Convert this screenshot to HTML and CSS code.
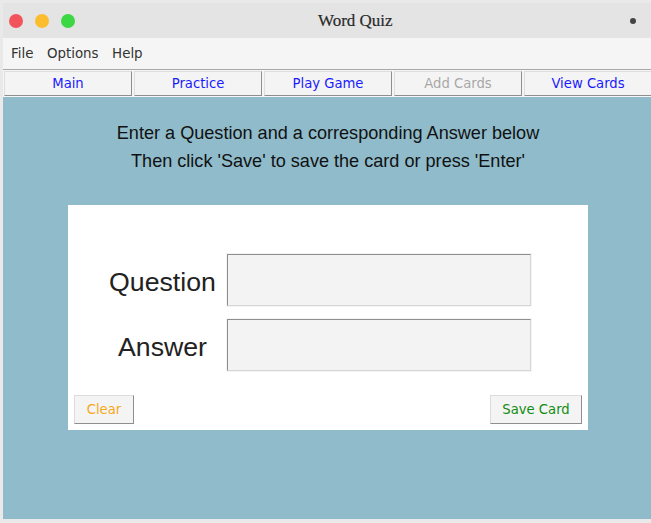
FILE: index.html
```html
<!DOCTYPE html>
<html>
<head>
<meta charset="utf-8">
<title>Word Quiz</title>
<link rel="stylesheet" href="styles.css">
</head>
<body>
<div class="window">
  <div class="titlebar">
    <div class="lights">
      <span class="light red"></span>
      <span class="light yellow"></span>
      <span class="light green"></span>
    </div>
    <div class="title">Word Quiz</div>
    <span class="dot"></span>
  </div>
  <div class="menubar">
    <span class="menu-item">File</span>
    <span class="menu-item">Options</span>
    <span class="menu-item">Help</span>
  </div>
  <div class="tabs">
    <button class="tab">Main</button>
    <button class="tab">Practice</button>
    <button class="tab">Play Game</button>
    <button class="tab disabled">Add Cards</button>
    <button class="tab">View Cards</button>
  </div>
  <div class="panel">
    <div class="intro">
      <p>Enter a Question and a corresponding Answer below</p>
      <p>Then click 'Save' to save the card or press 'Enter'</p>
    </div>
    <div class="card">
      <div class="fields">
        <div class="row">
          <label class="label">Question</label>
          <div class="input"></div>
        </div>
        <div class="row">
          <label class="label">Answer</label>
          <div class="input"></div>
        </div>
      </div>
      <div class="actions">
        <button class="btn clear">Clear</button>
        <button class="btn save">Save Card</button>
      </div>
    </div>
  </div>
</div>
</body>
</html>
```

FILE: styles.css
```css
html, body {
  margin: 0;
  padding: 0;
}
body {
  background: #e9e9e9;
  width: 651px;
  height: 523px;
  overflow: hidden;
}
.window {
  margin: 3px 0 0 3px;
  display: flex;
  flex-direction: column;
}
.titlebar {
  height: 35px;
  background: #e4e4e4;
  display: flex;
  align-items: center;
  position: relative;
}
.lights {
  display: flex;
  gap: 12px;
  margin-left: 6px;
}
.light {
  width: 14px;
  height: 14px;
  border-radius: 50%;
  display: block;
}
.red { background: #f2545b; }
.yellow { background: #fbbd2e; }
.green { background: #3bd843; }
.title {
  font-family: "Liberation Serif", serif;
  font-size: 17px;
  color: #2a2a2a;
  margin-left: 243px;
  padding-top: 1px;
  -webkit-text-stroke: 0.2px #2a2a2a;
}
.dot {
  width: 6px;
  height: 6px;
  border-radius: 50%;
  background: #444;
  margin-left: auto;
  margin-right: 15px;
}
.menubar {
  height: 31px;
  background: #f5f5f5;
  display: flex;
  align-items: center;
  padding-left: 8px;
  gap: 13.5px;
  font-family: "DejaVu Sans", sans-serif;
  font-size: 13.4px;
  color: #333;
}
.tabs {
  background: #f5f5f5;
  border-top: 1px solid #a8a8a8;
  padding: 1px 0 1px 1px;
  display: flex;
  gap: 2px;
}
.tab {
  width: 128px;
  height: 25px;
  flex: none;
  margin: 0;
  padding: 0;
  background: #f4f4f4;
  border: 1px solid;
  border-color: #dedede #8e8e8e #8e8e8e #dedede;
  font-family: "DejaVu Sans", sans-serif;
  font-size: 13.2px;
  color: #1a1aff;
}
.tab.disabled {
  color: #a8a8a8;
}
.panel {
  background: #8fbbcb;
  height: 422px;
  padding-top: 22px;
  box-sizing: border-box;
}
.intro {
  text-align: center;
  font-family: "Liberation Sans", Arial, sans-serif;
  font-size: 18.1px;
  color: #111;
  line-height: 28px;
  padding-left: 2px;
}
.intro p {
  margin: 0;
}
.card {
  margin: 30px 0 0 65px;
  width: 520px;
  height: 225px;
  background: #fff;
  box-sizing: border-box;
  padding: 49px 6px 6px 6px;
  display: flex;
  flex-direction: column;
}
.fields {
  display: flex;
  flex-direction: column;
  gap: 13px;
}
.row {
  display: flex;
  align-items: center;
}
.label {
  width: 153px;
  text-align: center;
  font-family: "Liberation Sans", Arial, sans-serif;
  font-size: 26.7px;
  color: #222;
  padding-left: 24px;
  padding-top: 4px;
  box-sizing: border-box;
}
.input {
  width: 304px;
  height: 52px;
  box-sizing: border-box;
  background: #f3f3f3;
  border: 1px solid;
  border-color: #8e8e8e #d6d6d6 #d6d6d6 #8e8e8e;
  box-shadow: 0 0 0 1px #f4f4f4;
}
.actions {
  margin-top: auto;
  display: flex;
  justify-content: space-between;
}
.btn {
  height: 29px;
  margin: 0;
  padding: 0;
  background: #f4f4f4;
  border: 1px solid;
  border-color: #dcdcdc #8e8e8e #8e8e8e #dcdcdc;
  font-family: "DejaVu Sans", sans-serif;
  font-size: 13.2px;
}
.clear {
  width: 60px;
  color: #f7a81c;
}
.save {
  width: 92px;
  color: #128c12;
}
```
